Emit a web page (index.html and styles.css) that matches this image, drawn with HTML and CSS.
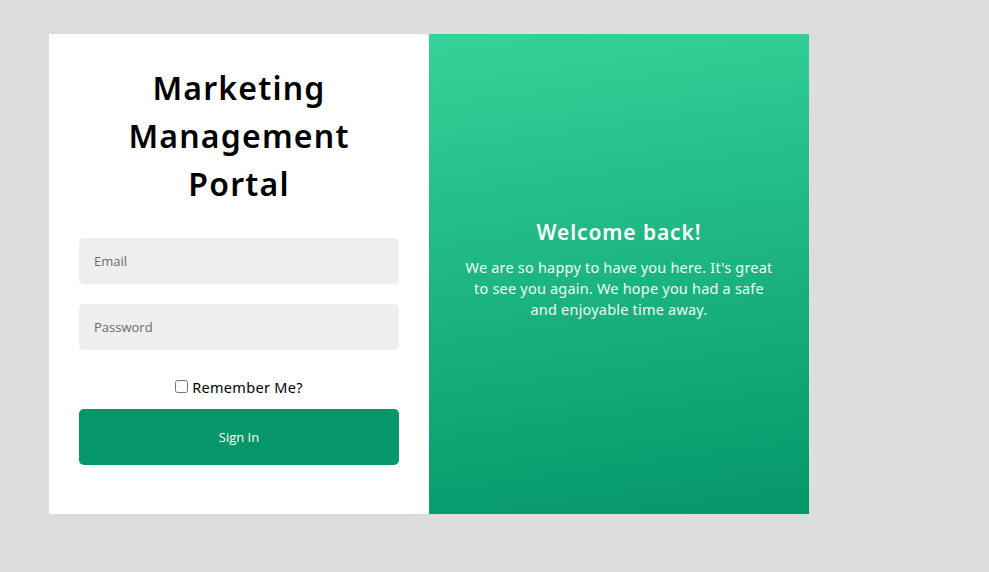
FILE: index.html
```html
<!DOCTYPE html>
<html lang="en">
<head>
<meta charset="utf-8">
<title>Marketing Management Portal</title>
<link rel="stylesheet" href="styles.css">
</head>
<body>
<main class="card">
  <section class="login">
    <h1 class="title">Marketing Management Portal</h1>
    <form class="form">
      <input class="field" type="email" placeholder="Email">
      <input class="field" type="password" placeholder="Password">
      <label class="remember"><input type="checkbox" class="check"> Remember Me?</label>
      <button class="submit" type="button">Sign In</button>
    </form>
  </section>
  <section class="welcome">
    <h2 class="welcome-title">Welcome back!</h2>
    <p class="welcome-text">We are so happy to have you here. It's great to see you again. We hope you had a safe and enjoyable time away.</p>
  </section>
</main>
</body>
</html>
```
FILE: styles.css
```css
html, body {
  margin: 0;
  padding: 0;
}
body {
  background: #dddddd;
  font-family: "Noto Sans", "Open Sans", sans-serif;
  padding: 34px 0 0 49px;
  min-height: 572px;
  box-sizing: border-box;
}
.card {
  display: flex;
  width: 760px;
  height: 480px;
}
.login {
  width: 380px;
  background: #ffffff;
  box-sizing: border-box;
  padding: 30px 30px 0;
  display: flex;
  flex-direction: column;
  align-items: center;
}
.title {
  margin: 0;
  font-size: 32px;
  line-height: 48px;
  font-weight: 600;
  letter-spacing: 1.2px;
  text-align: center;
  color: #000;
  width: 250px;
}
.form {
  width: 320px;
  margin-top: 30px;
  display: flex;
  flex-direction: column;
}
.field {
  height: 46px;
  border: none;
  border-radius: 5px;
  background: #eeeeee;
  padding: 0 15px;
  font-family: "Open Sans", "Noto Sans", sans-serif;
  font-size: 13px;
  color: #333;
  margin: 0 0 20px;
  outline: none;
}
.field::placeholder {
  color: #6b6b6b;
}
.remember {
  display: flex;
  align-items: center;
  justify-content: center;
  gap: 4px;
  font-size: 14.5px;
  letter-spacing: 0.3px;
  color: #000;
  height: 27px;
  margin: 3px 0 9px;
}
.check {
  margin: 0;
  width: 13px;
  height: 13px;
}
.submit {
  height: 56px;
  border: none;
  border-radius: 5px;
  background: #059669;
  color: #ffffff;
  font-family: "Open Sans", "Noto Sans", sans-serif;
  font-size: 13px;
}
.welcome {
  width: 380px;
  box-sizing: border-box;
  padding: 0 35px 10px;
  background: linear-gradient(172deg, #34d399 0%, #059669 100%);
  display: flex;
  flex-direction: column;
  align-items: center;
  justify-content: center;
  text-align: center;
  color: #ffffff;
}
.welcome-title {
  margin: 0 0 11px;
  font-size: 21px;
  line-height: 28px;
  font-weight: 600;
  letter-spacing: 0.9px;
}
.welcome-text {
  margin: 0;
  font-size: 14.5px;
  line-height: 21px;
  letter-spacing: 0.2px;
  color: #f0fdf4;
}
```
